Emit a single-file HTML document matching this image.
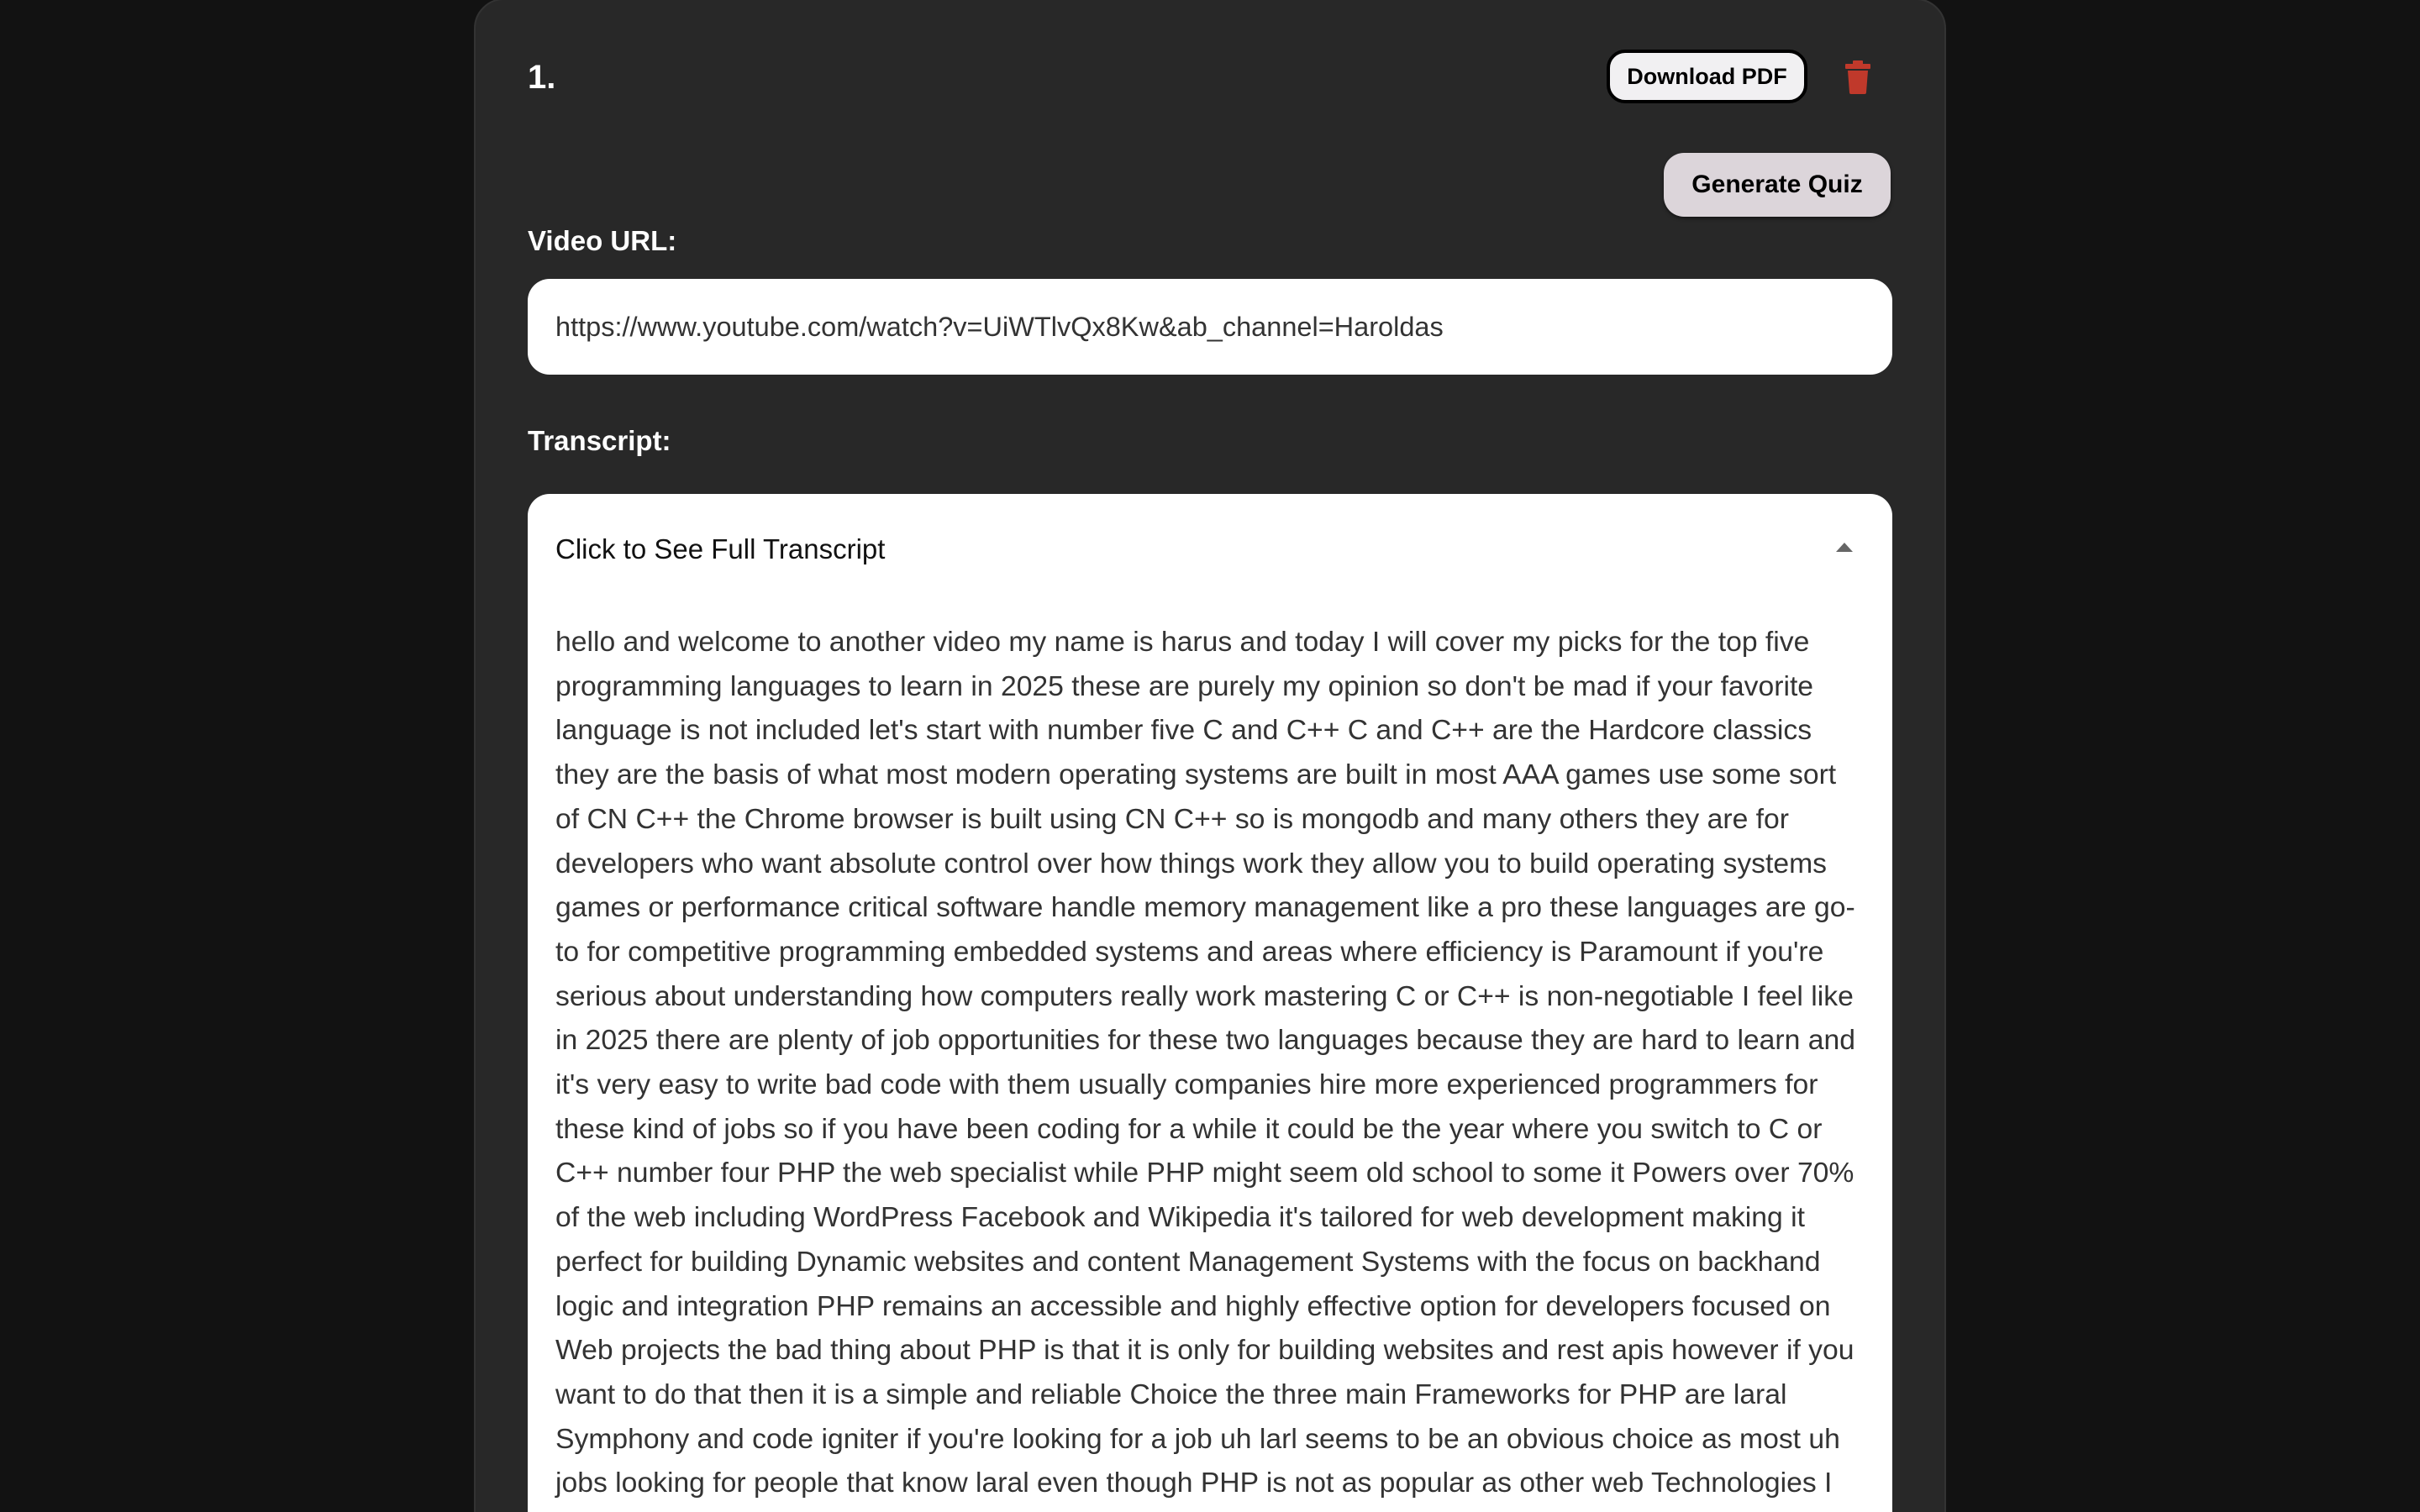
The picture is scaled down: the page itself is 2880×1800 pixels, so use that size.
<!DOCTYPE html>
<html><head><meta charset="utf-8"><style>
html,body{margin:0;padding:0;width:2880px;height:1800px;overflow:hidden;background:#121212;font-family:"Liberation Sans",Arial,sans-serif;}
.wrap{position:relative;width:2880px;height:1800px;overflow:hidden;}
.card{position:absolute;left:564px;top:-2px;width:1752px;height:1840px;background:#282828;border-radius:36px;border:2px solid #333;box-sizing:border-box;}
.num{position:absolute;left:628px;top:70px;color:#fff;font-size:40px;font-weight:bold;}
.dl{position:absolute;left:1912px;top:59px;width:239px;height:64px;box-sizing:border-box;background:#f1f0f2;border:4px solid #000;border-radius:22px;font-size:27px;font-weight:bold;color:#000;text-align:center;line-height:56px;}
.trash{position:absolute;left:2196px;top:72px;}
.gq{position:absolute;left:1980px;top:182px;width:270px;height:76px;background:#dcd5da;border-radius:24px;font-size:30px;font-weight:bold;color:#000;text-align:center;line-height:76px;box-shadow:0 2px 4px rgba(0,0,0,.5);}
.lbl{position:absolute;left:628px;color:#fff;font-size:33px;font-weight:bold;}
.inp{position:absolute;left:628px;top:332px;width:1624px;height:114px;background:#fff;border-radius:26px;box-sizing:border-box;padding-left:33px;line-height:114px;font-size:32.5px;color:#333;}
.box{position:absolute;left:628px;top:588px;width:1624px;height:1300px;background:#fff;border-radius:26px;}
.sum{position:absolute;left:33px;top:47px;font-size:33px;color:#111;}
.arr{position:absolute;left:1557px;top:58px;width:0;height:0;border-left:10px solid transparent;border-right:10px solid transparent;border-bottom:11px solid #666;}
.tx{position:absolute;left:33px;top:150px;font-size:33.7px;color:#333;line-height:52.7px;white-space:nowrap;}
</style></head><body><div class="wrap">
<div class="card"></div>
<div class="num">1.</div>
<div class="dl">Download PDF</div>
<svg class="trash" width="30" height="40" viewBox="0 0 30 40"><rect x="9" y="0" width="12" height="5" rx="1" fill="#c0392b"/><rect x="0" y="4" width="30" height="6" rx="1" fill="#c0392b"/><path d="M3 12h24l-2 26a2 2 0 0 1-2 2H7a2 2 0 0 1-2-2z" fill="#c0392b"/></svg>
<div class="gq">Generate Quiz</div>
<div class="lbl" style="top:268px">Video URL:</div>
<div class="inp">https://www.youtube.com/watch?v=UiWTlvQx8Kw&amp;ab_channel=Haroldas</div>
<div class="lbl" style="top:506px">Transcript:</div>
<div class="box">
<div class="sum">Click to See Full Transcript</div>
<div class="arr"></div>
<div class="tx">hello and welcome to another video my name is harus and today I will cover my picks for the top five<br>programming languages to learn in 2025 these are purely my opinion so don't be mad if your favorite<br>language is not included let's start with number five C and C++ C and C++ are the Hardcore classics<br>they are the basis of what most modern operating systems are built in most AAA games use some sort<br>of CN C++ the Chrome browser is built using CN C++ so is mongodb and many others they are for<br>developers who want absolute control over how things work they allow you to build operating systems<br>games or performance critical software handle memory management like a pro these languages are go-<br>to for competitive programming embedded systems and areas where efficiency is Paramount if you're<br>serious about understanding how computers really work mastering C or C++ is non-negotiable I feel like<br>in 2025 there are plenty of job opportunities for these two languages because they are hard to learn and<br>it's very easy to write bad code with them usually companies hire more experienced programmers for<br>these kind of jobs so if you have been coding for a while it could be the year where you switch to C or<br>C++ number four PHP the web specialist while PHP might seem old school to some it Powers over 70%<br>of the web including WordPress Facebook and Wikipedia it's tailored for web development making it<br>perfect for building Dynamic websites and content Management Systems with the focus on backhand<br>logic and integration PHP remains an accessible and highly effective option for developers focused on<br>Web projects the bad thing about PHP is that it is only for building websites and rest apis however if you<br>want to do that then it is a simple and reliable Choice the three main Frameworks for PHP are laral<br>Symphony and code igniter if you're looking for a job uh larl seems to be an obvious choice as most uh<br>jobs looking for people that know laral even though PHP is not as popular as other web Technologies I<br>think it is still a good choice to learn in 2025</div>
</div>
</div></body></html>
